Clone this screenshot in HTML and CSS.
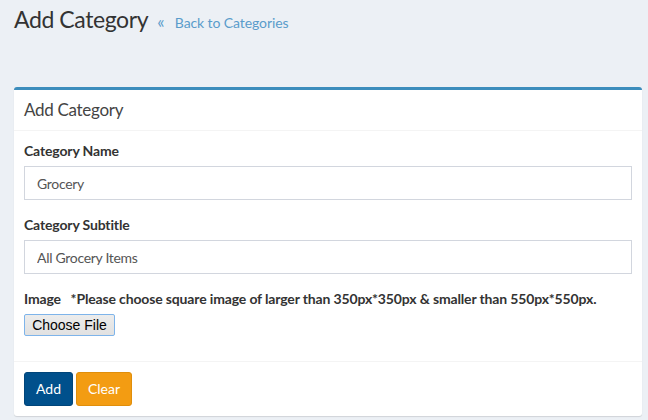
FILE: index.html
```html
<!DOCTYPE html>
<html>
<head>
<meta charset="utf-8">
<link rel="stylesheet" href="styles.css">
</head>
<body>
<div class="wrapper">
  <section class="content-header">
    <h1>Add Category <small><a href="#" class="back"><span class="raquo">&laquo;</span> Back to Categories</a></small></h1>
  </section>
  <section class="content">
    <div class="box">
      <div class="box-header">
        <h3 class="box-title">Add Category</h3>
      </div>
      <form class="form">
        <div class="box-body">
          <div class="form-group">
            <label class="label">Category Name</label>
            <input class="form-control" type="text" value="Grocery">
          </div>
          <div class="form-group">
            <label class="label">Category Subtitle</label>
            <input class="form-control" type="text" value="All Grocery Items">
          </div>
          <div class="form-group">
            <label class="label">Image&nbsp;&nbsp;&nbsp;*Please choose square image of larger than 350px*350px &amp; smaller than 550px*550px.</label>
            <div><span class="file-btn">Choose File</span></div>
          </div>
        </div>
        <div class="box-footer">
          <button type="button" class="btn btn-primary">Add</button>
          <button type="button" class="btn btn-warning">Clear</button>
        </div>
      </form>
    </div>
  </section>
</div>
</body>
</html>
```

FILE: styles.css
```css
* { box-sizing: border-box; }
html, body {
  margin: 0;
  padding: 0;
  background: #ecf0f5;
  font-family: "Lato", "Open Sans", sans-serif;
  font-size: 14px;
  color: #333;
}
.wrapper {
  width: 648px;
  height: 420px;
  overflow: hidden;
}
.content-header {
  padding: 5px 14px 0 14px;
}
.content-header h1 {
  margin: 0;
  font-size: 23px;
  font-weight: 400;
  line-height: 28px;
  letter-spacing: -0.4px;
  color: #333;
}
.content-header small {
  font-size: 14px;
  letter-spacing: -0.1px;
  padding-left: 4px;
}
.back {
  color: #5a9ccb;
  text-decoration: none;
}
.raquo {
  font-size: 17px;
  padding-right: 7px;
}
.content {
  padding: 50px 6px 0 14px;
}
.box {
  background: #fff;
  border-top: 3px solid #3c8dbc;
  border-radius: 3px;
  box-shadow: 0 1px 1px rgba(0, 0, 0, 0.12);
}
.box-header {
  padding: 10px;
  border-bottom: 1px solid #f4f4f4;
}
.box-title {
  margin: 0;
  font-size: 17px;
  font-weight: 400;
  line-height: 20px;
  letter-spacing: -0.3px;
  color: #444;
}
.box-body {
  padding: 10px 10px 10px 10px;
}
.form-group {
  margin-bottom: 15px;
}
.label {
  display: block;
  font-weight: 700;
  line-height: 20px;
  letter-spacing: -0.15px;
  margin-bottom: 5px;
  color: #333;
}
.form-control {
  display: block;
  width: 100%;
  height: 34px;
  padding: 6px 12px;
  font-family: inherit;
  font-size: 14px;
  letter-spacing: -0.3px;
  color: #555;
  border: 1px solid #d2d6de;
  border-radius: 0;
  background: #fff;
  outline: none;
}
.file-btn {
  display: inline-block;
  height: 22px;
  width: 91px;
  line-height: 20px;
  text-align: center;
  font-family: "Liberation Sans", Arial, sans-serif;
  font-size: 14px;
  color: #000;
  background: linear-gradient(#ececec, #e1e1e1);
  border: 1px solid #7eb4ea;
  border-radius: 2px;
}
.box-footer {
  padding: 10px;
  border-top: 1px solid #f4f4f4;
  display: flex;
  gap: 3px;
}
.btn {
  height: 34px;
  padding: 6px 0;
  font-family: inherit;
  font-size: 14px;
  line-height: 20px;
  text-align: center;
  border-radius: 3px;
  border: 1px solid transparent;
  color: #fff;
}
.btn-primary {
  background: #00508c;
  border-color: #00457a;
  width: 49px;
}
.btn-warning {
  background: #f39c12;
  border-color: #e08e0b;
  width: 56px;
}
```
